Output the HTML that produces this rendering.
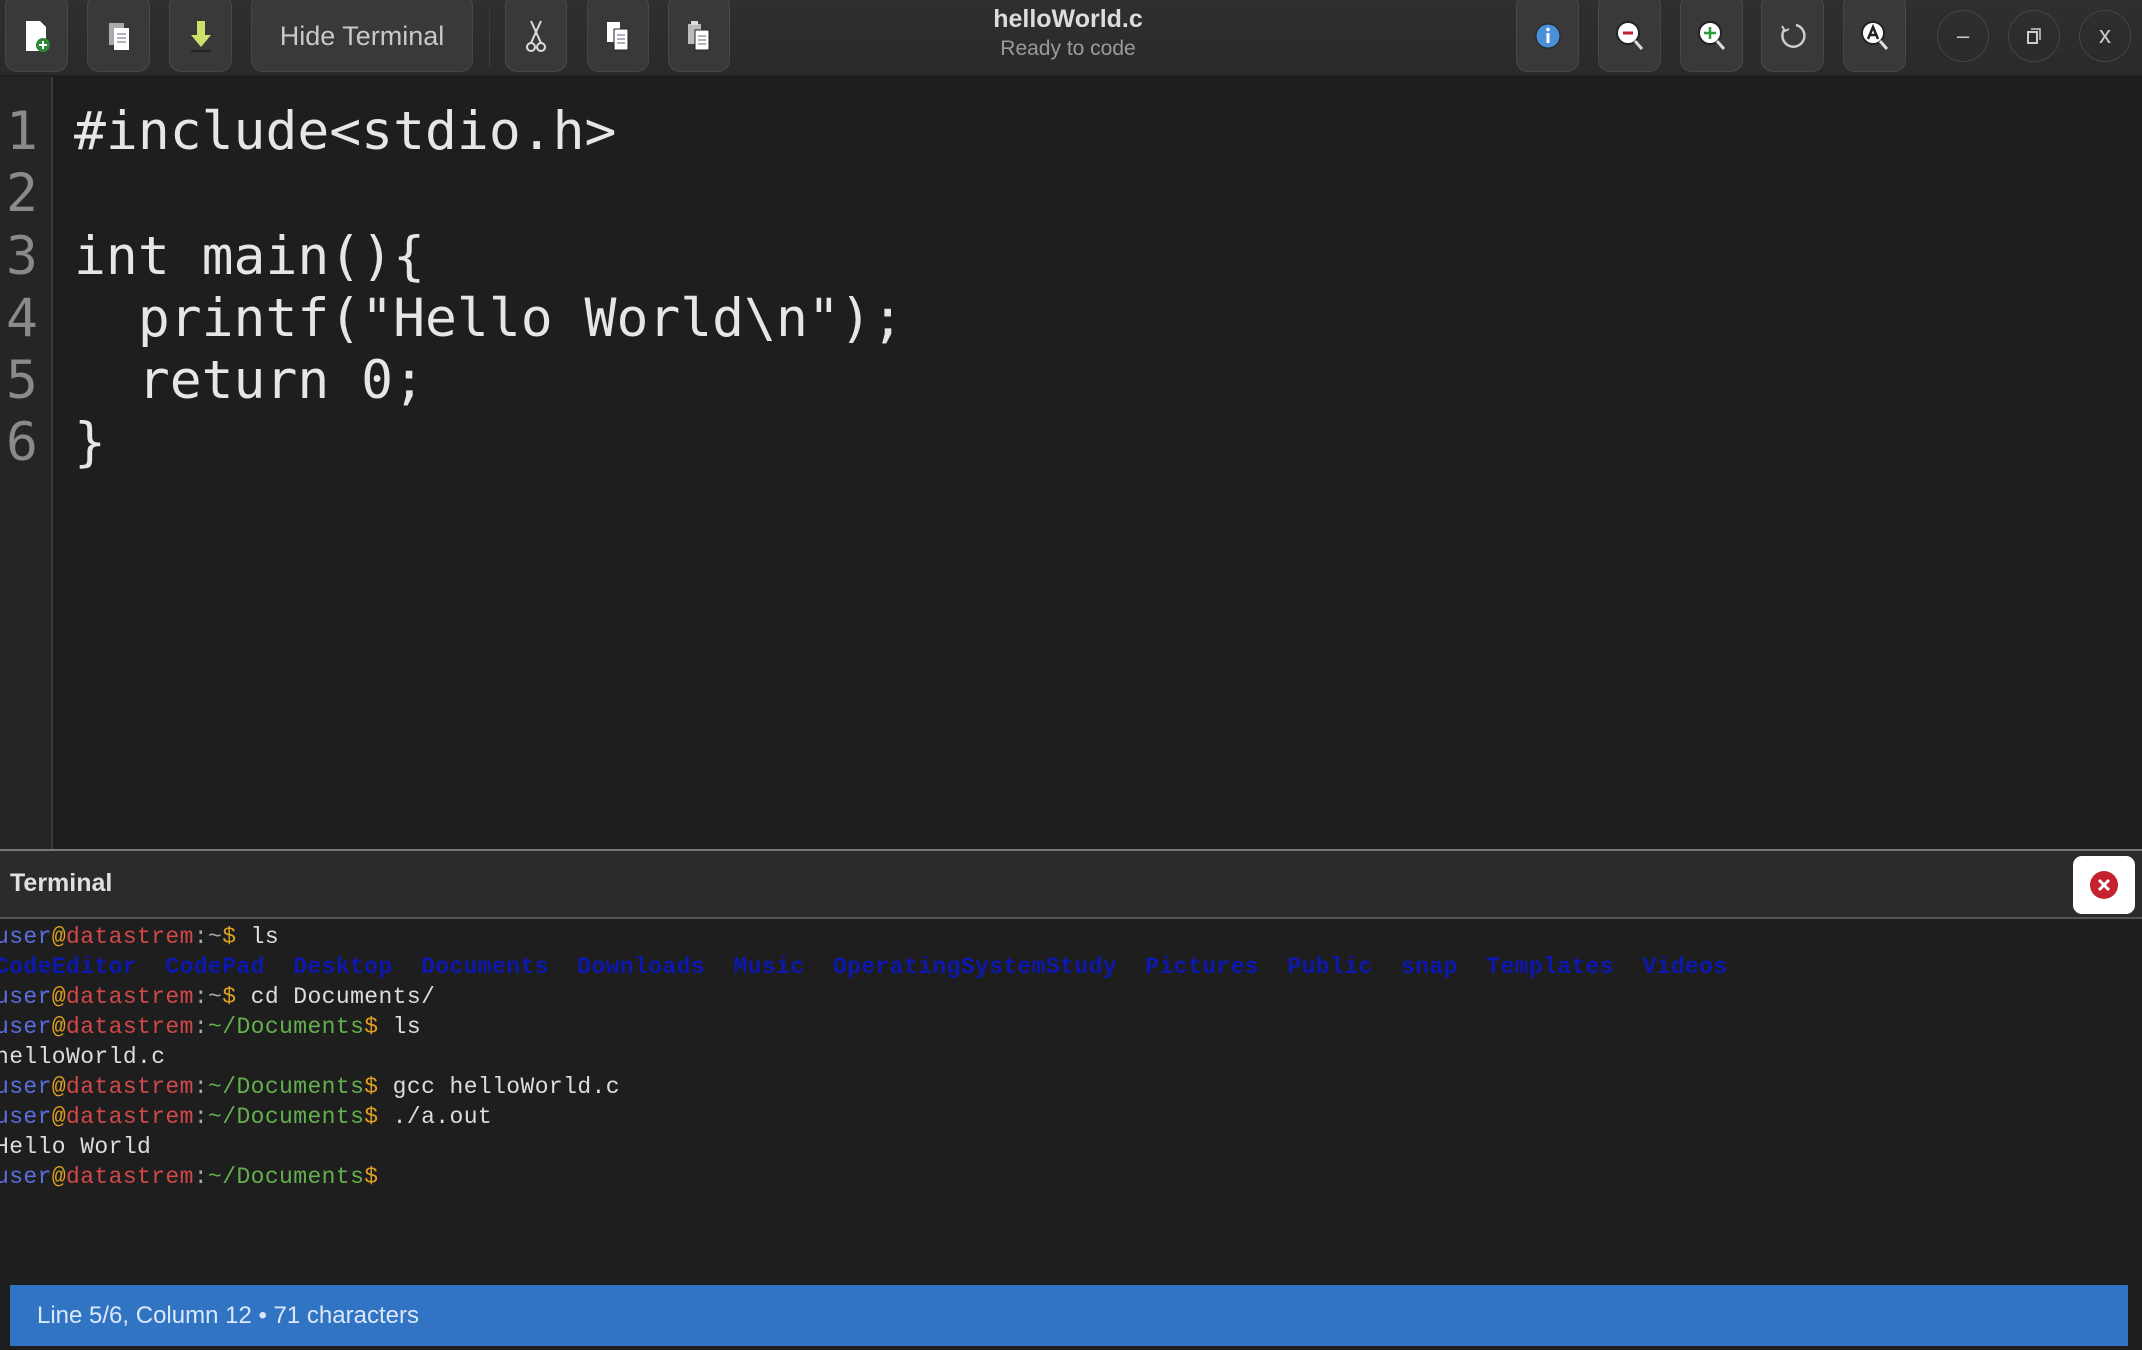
<!DOCTYPE html>
<html><head><meta charset="utf-8"><style>
*{margin:0;padding:0;box-sizing:border-box}
body{width:2142px;height:1350px;background:#1e1e1e;overflow:hidden;position:relative;font-family:"Liberation Sans",sans-serif}
#tb{position:absolute;left:0;top:0;width:2142px;height:76px;background:linear-gradient(#2f2f2f,#2a2a2a);border-bottom:1px solid #222}
.b{position:absolute;top:-6px;height:78px;background:#393939;border:1px solid #484848;border-radius:12px;display:flex;align-items:center;justify-content:center;padding-top:6px}
.c{position:absolute;top:10px;width:52px;height:52px;border:1px solid #454545;border-radius:50%;color:#ccc;font-size:22px;display:flex;align-items:center;justify-content:center}
#gut{position:absolute;left:0;top:77px;width:53px;height:772px;background:#252525;border-right:2px solid #3a3a3a}
.code{position:absolute;font-family:"DejaVu Sans Mono","Liberation Mono",monospace;font-size:53px;line-height:62.3px;white-space:pre;color:#e6e6e6}
#th{position:absolute;left:0;top:849px;width:2142px;height:70px;background:#2b2b2d;border-top:2px solid #777;border-bottom:2px solid #555}
#term{position:absolute;left:-5px;top:922px;font-family:"Liberation Mono",monospace;font-size:23px;letter-spacing:0.4px;line-height:30px;white-space:pre;color:#ddd}
.u{color:#5a6ee0}.a{color:#e0a020}.h{color:#d04848}.g{color:#aaa}.p{color:#62b04e}.d{color:#0c18b0;font-weight:bold}
#sb{position:absolute;left:10px;top:1285px;width:2118px;height:61px;background:#3274c4;color:#dbe8f8;font-size:24px;padding-left:27px;line-height:61px}
</style></head><body>
<div id="tb">
 <div class="b" style="left:5px;width:63px"><svg width="26" height="34" viewBox="0 0 26 34"><path d="M2 2h14l6 6v24H2z" fill="#fff"/><circle cx="19" cy="26" r="7" fill="#2a8a3a"/><path d="M19 22v8M15 26h8" stroke="#fff" stroke-width="2"/></svg></div>
 <div class="b" style="left:87px;width:63px"><svg width="26" height="32" viewBox="0 0 26 32"><rect x="3" y="3" width="15" height="22" fill="#aaa"/><rect x="8" y="8" width="15" height="22" fill="#fff"/><path d="M11 14h9M11 18h9M11 22h9" stroke="#99a" stroke-width="1.5"/></svg></div>
 <div class="b" style="left:169px;width:63px"><svg width="22" height="34" viewBox="0 0 22 34"><path d="M7 2h8v14h6L11 28 1 16h6z" fill="#cde06a"/><path d="M1 32h20" stroke="#222" stroke-width="2"/></svg></div>
 <div class="b" style="left:251px;width:222px;color:#c8c8c8;font-size:27px">Hide Terminal</div>
 <div style="position:absolute;left:489px;top:8px;width:1px;height:60px;background:#3c3c3c"></div>
 <div class="b" style="left:505px;width:62px"><svg width="20" height="34" viewBox="0 0 20 34"><path d="M5 2l10 22M15 2L5 24" stroke="#ddd" stroke-width="2"/><circle cx="5" cy="28" r="4" fill="none" stroke="#ddd" stroke-width="2"/><circle cx="15" cy="28" r="4" fill="none" stroke="#ddd" stroke-width="2"/></svg></div>
 <div class="b" style="left:587px;width:62px"><svg width="26" height="32" viewBox="0 0 26 32"><rect x="2" y="2" width="13" height="20" fill="#fff"/><rect x="9" y="9" width="14" height="21" fill="#fff" stroke="#222"/><path d="M12 15h8M12 19h8M12 23h8" stroke="#99a" stroke-width="1.5"/></svg></div>
 <div class="b" style="left:668px;width:62px"><svg width="26" height="32" viewBox="0 0 26 32"><rect x="2" y="4" width="13" height="20" fill="#bbb"/><rect x="5" y="1" width="7" height="4" fill="#ddd"/><rect x="9" y="10" width="14" height="20" fill="#fff" stroke="#222"/><path d="M12 16h8M12 20h8M12 24h8" stroke="#99a" stroke-width="1.5"/></svg></div>
 <div style="position:absolute;left:968px;width:200px;top:5px;text-align:center;font-size:25px;font-weight:bold;color:#ddd">helloWorld.c</div>
 <div style="position:absolute;left:968px;width:200px;top:37px;text-align:center;font-size:21px;color:#9a9a9a">Ready to code</div>
 <div class="b" style="left:1516px;width:63px"><svg width="28" height="28"><circle cx="14" cy="14" r="12" fill="#4a90d8" stroke="#222"/><rect x="12.5" y="11" width="3" height="10" fill="#fff"/><circle cx="14" cy="7.5" r="1.8" fill="#fff"/></svg></div>
 <div class="b" style="left:1598px;width:63px"><svg width="30" height="32"><circle cx="13" cy="13" r="11" fill="#fff" stroke="#222" stroke-width="2"/><path d="M20 21l7 8" stroke="#ddd" stroke-width="3"/><path d="M8 13h10" stroke="#c02030" stroke-width="3"/></svg></div>
 <div class="b" style="left:1680px;width:63px"><svg width="30" height="32"><circle cx="13" cy="13" r="11" fill="#fff" stroke="#222" stroke-width="2"/><path d="M20 21l7 8" stroke="#ddd" stroke-width="3"/><path d="M7 13h12M13 7v12" stroke="#2a9a3a" stroke-width="2.5"/></svg></div>
 <div class="b" style="left:1761px;width:63px"><svg width="30" height="30"><path d="M18 4a11 11 0 1 1-12 5" fill="none" stroke="#ccc" stroke-width="2.5"/><path d="M4 5l3 5 4-2" fill="none" stroke="#ccc" stroke-width="2"/></svg></div>
 <div class="b" style="left:1843px;width:63px"><svg width="30" height="32"><circle cx="13" cy="13" r="11" fill="#fff" stroke="#222" stroke-width="2"/><path d="M20 21l7 8" stroke="#ddd" stroke-width="3"/><path d="M8 19l5-12 5 12M10 15h6" fill="none" stroke="#222" stroke-width="2.5"/></svg></div>
 <div class="c" style="left:1937px">–</div>
 <div class="c" style="left:2008px"><svg width="14" height="16"><rect x="1" y="4" width="9" height="11" fill="none" stroke="#ccc" stroke-width="2"/><path d="M4 1h9v11" fill="none" stroke="#ccc" stroke-width="1.5"/></svg></div>
 <div class="c" style="left:2079px;font-size:24px">x</div>
</div>
<div id="gut"></div>
<div class="code" style="left:6px;top:101px;color:#8a8a8a">1
2
3
4
5
6</div>
<div class="code" style="left:74px;top:101px">#include&lt;stdio.h&gt;

int main(){
  printf("Hello World\n");
  return 0;
}</div>
<div id="th"><div style="position:absolute;left:10px;top:18px;font-size:25px;font-weight:bold;color:#e0e0e0">Terminal</div>
<div style="position:absolute;left:2073px;top:5px;width:62px;height:58px;background:#fff;border-radius:9px;display:flex;align-items:center;justify-content:center"><svg width="30" height="30"><circle cx="15" cy="15" r="14" fill="#c4222e"/><path d="M10 10l10 10M20 10L10 20" stroke="#fff" stroke-width="3"/></svg></div></div>
<div id="term"><span class="u">user</span><span class="a">@</span><span class="h">datastrem</span><span class="g">:~</span><span class="a">$</span> ls
<span class="d">CodeEditor  CodePad  Desktop  Documents  Downloads  Music  OperatingSystemStudy  Pictures  Public  snap  Templates  Videos</span>
<span class="u">user</span><span class="a">@</span><span class="h">datastrem</span><span class="g">:~</span><span class="a">$</span> cd Documents/
<span class="u">user</span><span class="a">@</span><span class="h">datastrem</span><span class="g">:</span><span class="p">~/Documents</span><span class="a">$</span> ls
helloWorld.c
<span class="u">user</span><span class="a">@</span><span class="h">datastrem</span><span class="g">:</span><span class="p">~/Documents</span><span class="a">$</span> gcc helloWorld.c
<span class="u">user</span><span class="a">@</span><span class="h">datastrem</span><span class="g">:</span><span class="p">~/Documents</span><span class="a">$</span> ./a.out
Hello World
<span class="u">user</span><span class="a">@</span><span class="h">datastrem</span><span class="g">:</span><span class="p">~/Documents</span><span class="a">$</span></div>
<div id="sb">Line 5/6, Column 12 • 71 characters</div>
</body></html>
